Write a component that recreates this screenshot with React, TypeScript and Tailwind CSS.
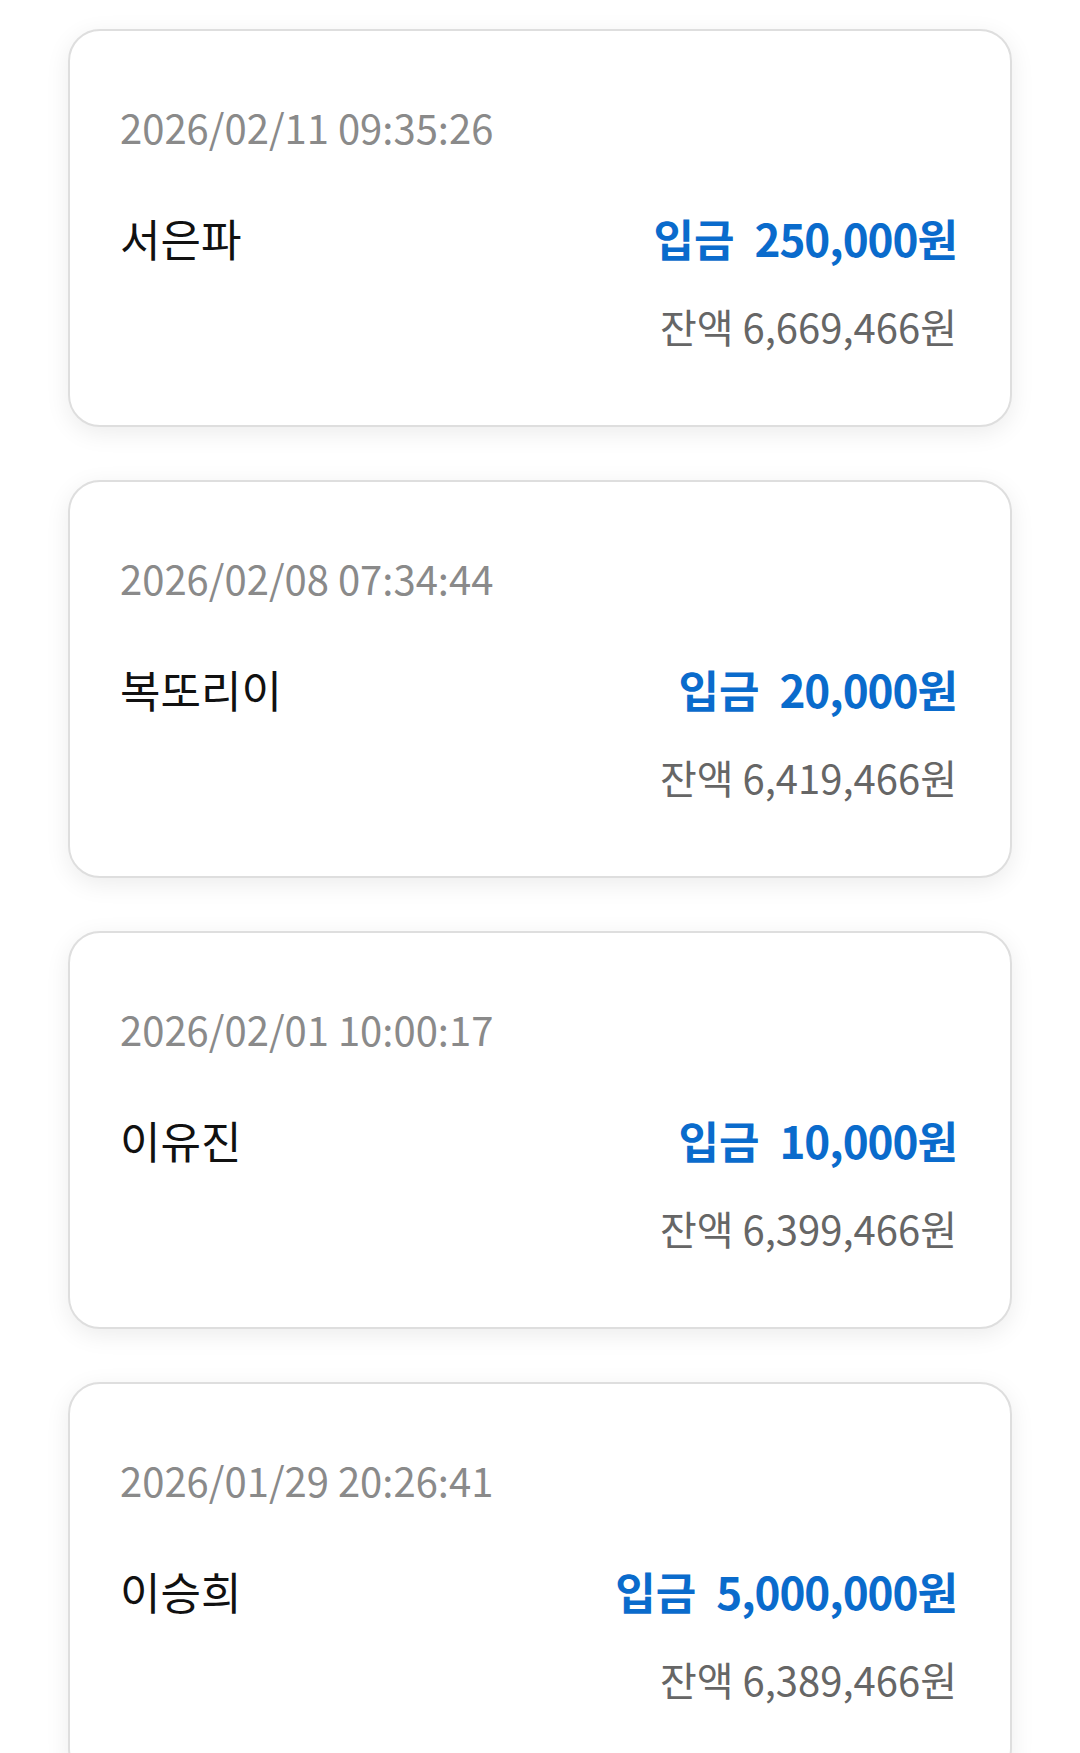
import React from "react";

type Tx = { date: string; name: string; amount: string; balance: string };

const txs: Tx[] = [
  { date: "2026/02/11 09:35:26", name: "서은파", amount: "250,000원", balance: "6,669,466원" },
  { date: "2026/02/08 07:34:44", name: "복또리이", amount: "20,000원", balance: "6,419,466원" },
  { date: "2026/02/01 10:00:17", name: "이유진", amount: "10,000원", balance: "6,399,466원" },
  { date: "2026/01/29 20:26:41", name: "이승희", amount: "5,000,000원", balance: "6,389,466원" },
];

function Card({ tx }: { tx: Tx }) {
  return (
    <div className="h-[398px] shrink-0 rounded-[32px] border-2 border-[#dedede] bg-white pl-[50px] pr-[53px] pt-[72px] shadow-[0_6px_24px_rgba(0,0,0,0.08)]">
      <div className="text-[40px] leading-[48px] text-[#8a8a8a]">{tx.date}</div>
      <div className="mt-[61px] flex items-center justify-between">
        <div className="text-[44px] leading-[52px] text-[#111111]">{tx.name}</div>
        <div className="text-[44px] leading-[52px] font-bold text-[#0a6bcc]">
          입금<span className="ml-[20px] tracking-[-1px]">{tx.amount}</span>
        </div>
      </div>
      <div className="mt-[38px] text-right text-[40px] leading-[48px] text-[#666666]">
        잔액 {tx.balance}
      </div>
    </div>
  );
}

export default function App() {
  return (
    <div
      className="h-[1753px] w-[1080px] overflow-hidden bg-white"
      style={{ fontFamily: '"Noto Sans CJK KR", "Noto Sans", sans-serif' }}
    >
      <div className="flex flex-col gap-[53px] pl-[68px] pr-[68px] pt-[29px]">
        {txs.map((t) => (
          <Card key={t.date} tx={t} />
        ))}
      </div>
    </div>
  );
}
